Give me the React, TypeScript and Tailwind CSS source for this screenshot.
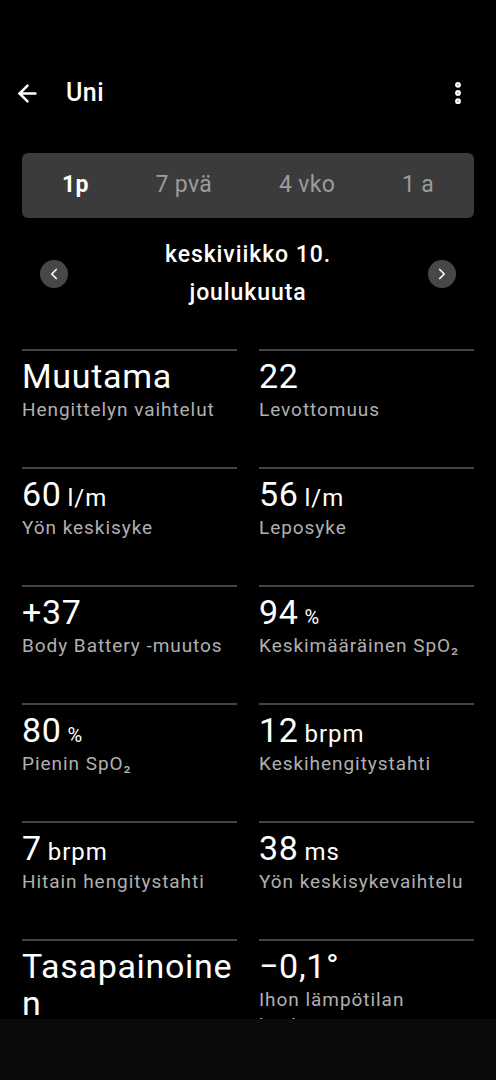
import React from 'react';
import { ArrowLeft, EllipsisVertical, ChevronLeft, ChevronRight } from 'lucide-react';

interface Stat {
    value: string;
    unit?: string;
    small?: boolean;
    label: string;
}

const stats: Stat[] = [
    { value: 'Muutama', label: 'Hengittelyn vaihtelut' },
    { value: '22', label: 'Levottomuus' },
    { value: '60', unit: 'l/m', label: 'Yön keskisyke' },
    { value: '56', unit: 'l/m', label: 'Leposyke' },
    { value: '+37', label: 'Body Battery -muutos' },
    { value: '94', unit: '%', small: true, label: 'Keskimääräinen SpO₂' },
    { value: '80', unit: '%', small: true, label: 'Pienin SpO₂' },
    { value: '12', unit: 'brpm', label: 'Keskihengitystahti' },
    { value: '7', unit: 'brpm', label: 'Hitain hengitystahti' },
    { value: '38', unit: 'ms', label: 'Yön keskisykevaihtelu' },
    { value: 'Tasapainoinen', label: 'Unen ajoitus' },
    { value: '−0,1°', label: 'Ihon lämpötilan keskiarvosta poikkeama' },
];

const ranges = ['1p', '7 pvä', '4 vko', '1 a'];

export default function App() {
    return (
        <div
            className="h-[1080px] w-[496px] flex flex-col bg-black text-white overflow-hidden"
            style={{ fontFamily: 'Roboto, "Noto Sans", sans-serif' }}
        >
            <div className="h-[1019px] overflow-hidden">
                {/* Status bar space */}
                <div className="h-[60px]" />

                {/* Header */}
                <div className="h-[66px] flex items-center pl-[14px] pr-[24px]">
                    <ArrowLeft className="w-[27px] h-[27px]" strokeWidth={2.2} />
                    <h1 className="ml-[25px] text-[25px] font-medium tracking-[0.02em]">Uni</h1>
                    <div className="flex-1" />
                    <EllipsisVertical className="w-[28px] h-[28px]" strokeWidth={3} />
                </div>

                {/* Range selector */}
                <div className="mx-[22px] mt-[27px] h-[65px] rounded-md bg-[#3b3b3b] flex items-center justify-between px-[40px] tracking-[0.02em]">
                    {ranges.map((r, i) => (
                        <span
                            key={r}
                            className={
                                i === 0
                                    ? 'text-[23px] font-bold text-white'
                                    : 'text-[23px] text-[#9c9c9c]'
                            }
                        >
                            {r}
                        </span>
                    ))}
                </div>

                {/* Date navigation */}
                <div className="mt-[18px] px-[40px] flex items-center justify-between">
                    <div className="w-[28px] h-[28px] rounded-full bg-[#474747] flex items-center justify-center">
                        <ChevronLeft className="w-[18px] h-[18px]" strokeWidth={2.2} />
                    </div>
                    <p className="text-[23px] font-medium leading-[38px] tracking-[0.04em] text-center">
                        keskiviikko 10.
                        <br />
                        joulukuuta
                    </p>
                    <div className="w-[28px] h-[28px] rounded-full bg-[#474747] flex items-center justify-center">
                        <ChevronRight className="w-[18px] h-[18px]" strokeWidth={2.2} />
                    </div>
                </div>

                {/* Stats grid */}
                <div className="mt-[37px] mx-[22px] grid grid-cols-2 gap-x-[22px]">
                    {stats.map((s) => (
                        <div key={s.label} className="h-[118px] border-t-2 border-[#444444] pt-[7px]">
                            <div className="text-[34px] leading-[37px] tracking-[0.02em] break-words">
                                {s.value}
                                {s.unit && (
                                    <span
                                        className={
                                            s.small
                                                ? 'ml-[6px] text-[20px] leading-none tracking-[0.04em]'
                                                : 'ml-[6px] text-[24px] leading-none tracking-[0.04em]'
                                        }
                                    >
                                        {s.unit}
                                    </span>
                                )}
                            </div>
                            <div className="mt-[2px] text-[19px] leading-[26px] tracking-[0.05em] text-[#b0b0b0]">
                                {s.label}
                            </div>
                        </div>
                    ))}
                </div>
            </div>

            {/* System nav bar */}
            <div className="flex-1 bg-[#0b0b0b]" />
        </div>
    );
}
